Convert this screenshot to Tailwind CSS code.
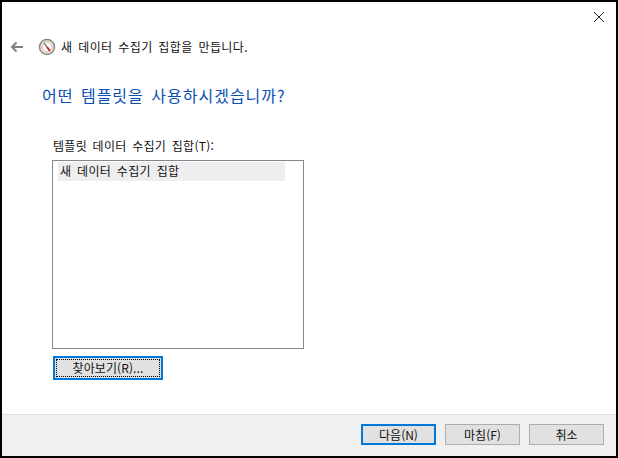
<!DOCTYPE html>
<html lang="ko">
<head>
<meta charset="utf-8">
<script src="https://cdn.jsdelivr.net/npm/@tailwindcss/browser@4"></script>
</head>
<body class="m-0 bg-white">
<div class="w-[618px] h-[458px] border-2 border-black bg-white flex flex-col overflow-hidden text-[12px] text-[#111] font-['Noto_Sans_CJK_KR','Noto_Sans',sans-serif]">
  <div class="h-[412px] flex flex-col">
    <div class="h-[28px] flex justify-end items-start">
      <svg class="mt-[9px] mr-[11px]" width="12" height="12" viewBox="0 0 12 12"><path d="M1 1L11 11M11 1L1 11" stroke="#222" stroke-width="1" fill="none"/></svg>
    </div>
    <div class="h-[18px] mt-[8px] flex items-center">
      <svg class="ml-[8px]" width="14" height="12" viewBox="0 0 14 12"><path d="M13 6H2M6.500 1.500L2 6L6.500 10.500" stroke="#808080" stroke-width="2" fill="none"/></svg>
      <svg class="ml-[14px]" width="18" height="18" viewBox="0 0 18 18"><circle cx="9" cy="9" r="7.500" fill="#efeade" stroke="#8c8780" stroke-width="1.500"/><circle cx="9" cy="9" r="5" fill="#fff" stroke="#c4beb2" stroke-width="1"/><path d="M6 5L9 9" stroke="#777" stroke-width="1.300"/><path d="M9 9L12 13" stroke="#d21a1a" stroke-width="1.800"/></svg>
      <span class="ml-[5px] tracking-[0.4px] [word-spacing:2px] leading-[18px]">새 데이터 수집기 집합을 만듭니다.</span>
    </div>
    <h1 class="ml-[40px] mt-[27px] text-[16px] leading-[24px] font-normal text-[#0a4fb4] tracking-[1px] [word-spacing:2px]">어떤 템플릿을 사용하시겠습니까?</h1>
    <label class="ml-[51px] mt-[30px] leading-[18px] block tracking-[0.28px] [word-spacing:2px]">템플릿 데이터 수집기 집합(T):</label>
    <div class="ml-[50px] mt-[5px] w-[252px] h-[189px] border border-[#828790] bg-white pt-[1px] pl-[5px]">
      <div class="w-[227px] h-[19px] bg-[#eeeeee] pl-[2px] leading-[18px] tracking-[0.33px] [word-spacing:2px]">새 데이터 수집기 집합</div>
    </div>
    <div class="ml-[51px] mt-[7px] w-[110px] h-[24px] border-2 border-[#0078d7] bg-[#e1e1e1] p-[1px]">
      <button class="w-full h-full border border-dotted border-black flex items-center justify-center leading-none tracking-[0.1px]">찾아보기(R)...</button>
    </div>
  </div>
  <div class="flex-1 bg-[#f0f0f0] border-t border-[#dfdfdf] flex justify-end gap-[9px] pt-[9px] pr-[12px]">
    <button class="w-[75px] h-[21px] border-2 border-[#0078d7] bg-[#e1e1e1] flex items-center justify-center leading-none">다음(N)</button>
    <button class="w-[75px] h-[21px] border border-[#adadad] bg-[#e1e1e1] flex items-center justify-center leading-none">마침(F)</button>
    <button class="w-[75px] h-[21px] border border-[#adadad] bg-[#e1e1e1] flex items-center justify-center leading-none">취소</button>
  </div>
</div>
</body>
</html>
